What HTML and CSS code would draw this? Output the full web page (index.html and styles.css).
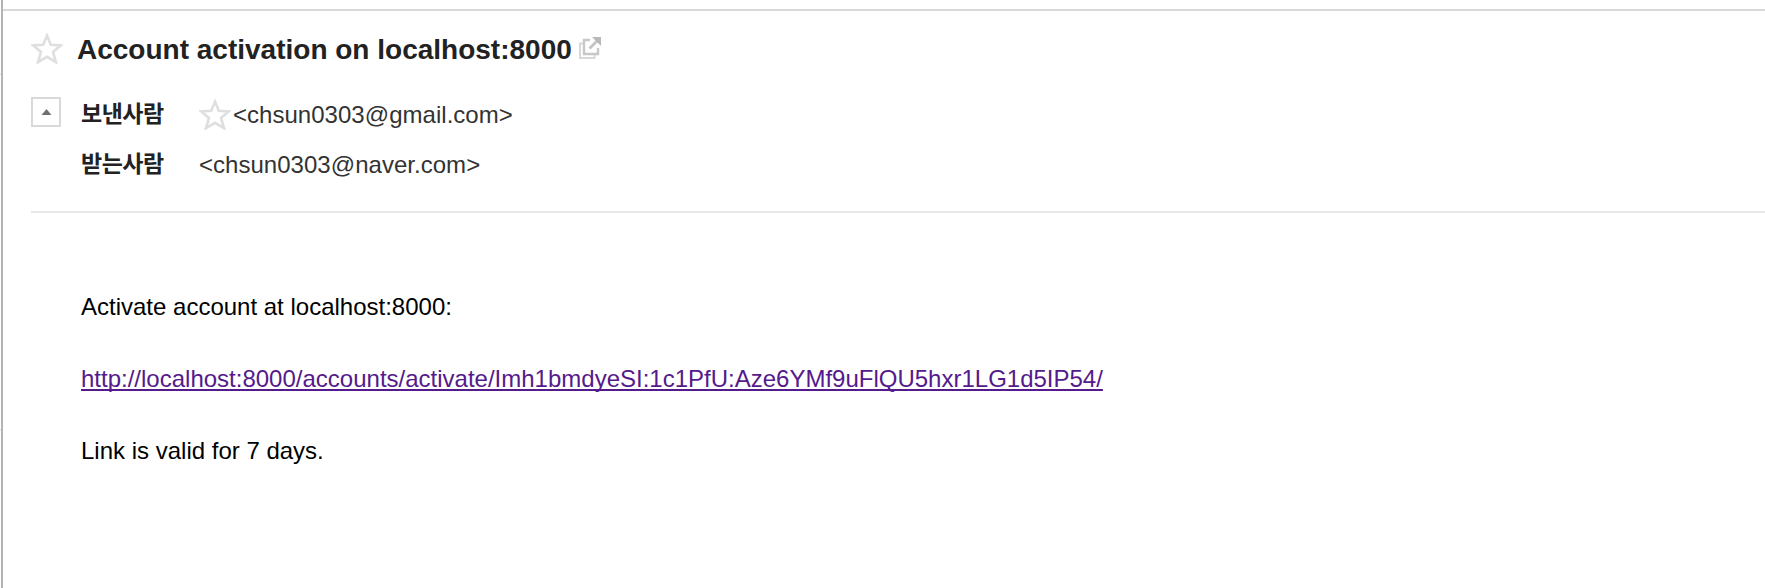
FILE: index.html
```
<!DOCTYPE html>
<html lang="ko">
<head>
<meta charset="utf-8">
<title>Account activation on localhost:8000</title>
<link rel="stylesheet" href="styles.css">
</head>
<body>
<div class="app">
  <div class="gutter"><i class="tick"></i><i class="tick"></i></div>
  <main class="mail">
    <header class="mail-header">
      <div class="title-row">
        <svg class="star" viewBox="0 0 32 32"><path d="M16 3.6 L19.8 12.8 L29.6 13.5 L22 19.9 L25 30.2 L16 24.8 L7 30.2 L10 19.9 L2.4 13.5 L12.2 12.8 Z"/></svg>
        <h1 class="title">Account activation on localhost:8000</h1>
        <svg class="popup" viewBox="0 0 22 22"><path class="back" d="M4 6.5H1V21H15.5V18"/><path class="front" d="M11 3H5V17H19V11"/><path class="shaft" d="M10.5 11.5L19 3"/><path class="head" d="M13 0H22V9L18.5 5.5L16.5 3.5Z"/></svg>
      </div>
      <div class="people">
        <button class="toggle" aria-label="접기"><svg class="arrow" viewBox="0 0 10 6"><path d="M5 0L10 6H0Z"/></svg></button>
        <dl class="fields">
          <dt class="label">보낸사람</dt>
          <dd class="value"><svg class="star" viewBox="0 0 32 32"><path d="M16 3.6 L19.8 12.8 L29.6 13.5 L22 19.9 L25 30.2 L16 24.8 L7 30.2 L10 19.9 L2.4 13.5 L12.2 12.8 Z"/></svg><span class="address sender">&lt;chsun0303@gmail.com&gt;</span></dd>
          <dt class="label">받는사람</dt>
          <dd class="value"><span class="address receiver">&lt;chsun0303@naver.com&gt;</span></dd>
        </dl>
      </div>
    </header>
    <article class="mail-body">
      <p class="intro">Activate account at localhost:8000:</p>
      <p><a class="link" href="#">http://localhost:8000/accounts/activate/Imh1bmdyeSI:1c1PfU:Aze6YMf9uFlQU5hxr1LG1d5IP54/</a></p>
      <p class="note">Link is valid for 7 days.</p>
    </article>
  </main>
</div>
</body>
</html>
```
FILE: styles.css
```
* { box-sizing: border-box; }
body {
  margin: 0;
  background: #fff;
  color: #222;
  font: 24px/36px "Liberation Sans", "Noto Sans CJK KR", sans-serif;
}
.app { display: flex; height: 588px; overflow: hidden; }
.gutter {
  width: 3px;
  border-right: 2px solid #b1b3b5;
  display: flex;
  flex-direction: column;
  padding-top: 73px;
  gap: 354px;
}
.tick { height: 2px; flex: none; background: #ececec; }
.mail { flex: 1; padding-top: 9px; white-space: nowrap; }
.mail-header {
  border-top: 2px solid #d9d9d9;
  padding-top: 21px;
}
.title-row { display: flex; height: 35px; margin-left: 28px; }
.star {
  width: 32px;
  height: 32px;
  flex: none;
  fill: #fff;
  stroke: #dfdfdf;
  stroke-width: 2.6;
}
.title {
  width: 494px;
  margin: 0 0 0 14px;
  font-size: 28px;
  line-height: 36px;
}
.popup { width: 22px; height: 22px; margin: 5px 0 0 8px; fill: none; }
.popup .back { stroke: #d8d8d8; stroke-width: 2; }
.popup .front { stroke: #c8c8c8; stroke-width: 2.4; }
.popup .shaft { stroke: #c4c4c4; stroke-width: 2.8; }
.popup .head { fill: #b8b8b8; }
.people {
  display: flex;
  margin-left: 28px;
  padding: 22px 0 21px;
  border-bottom: 2px solid #e8e8e8;
}
.toggle {
  width: 30px;
  height: 30px;
  margin: 8px 0 0;
  padding: 0;
  border: 2px solid #d9d9d9;
  background: #fff;
  display: grid;
  place-items: center;
}
.arrow { width: 11px; height: 6.6px; fill: #707070; }
.fields {
  display: grid;
  grid-template-columns: 118px auto;
  grid-auto-rows: 50px;
  margin: 1px 0 0 20px;
  line-height: 50px;
}
.label {
  font-family: "Noto Sans CJK KR", sans-serif;
  font-weight: 700;
  font-size: 23px;
  line-height: 45px;
  letter-spacing: -0.5px;
}
.value { margin: 0; display: flex; }
.value .star { margin: 8px 2px 0 0; }
.address { color: #333; letter-spacing: 0.03px; }
.mail-body { margin: 76px 0 0 78px; color: #000; }
.mail-body p { margin: 0 0 36px; }
.link {
  color: #551a8b;
  text-decoration: underline;
  text-decoration-thickness: 2px;
  text-decoration-skip-ink: none;
  text-underline-offset: 2px;
}
```
